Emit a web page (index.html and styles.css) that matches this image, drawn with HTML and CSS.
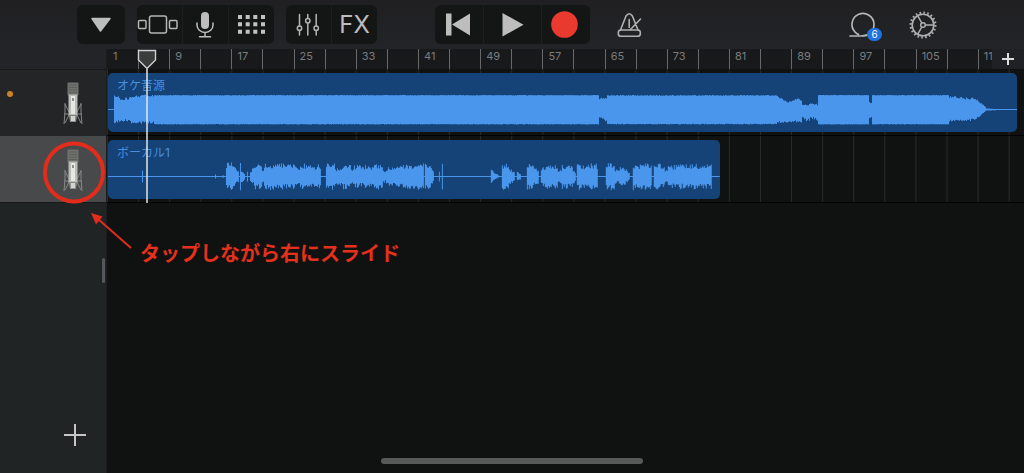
FILE: index.html
```html
<!DOCTYPE html>
<html lang="ja">
<head>
<meta charset="utf-8">
<meta name="viewport" content="width=device-width, initial-scale=1">
<title>トラック</title>
<link rel="stylesheet" href="styles.css">
</head>
<body>
<div class="app">
  <header class="toolbar">
    <div class="tools">
      <div class="group">
        <button class="tool wide" aria-label="メニュー"><svg width="48" height="39" viewBox="0 0 48 39"><path d="M15 13.500h18L23.500 26z" fill="#bdbdbd" stroke="#bdbdbd" stroke-width="1.500" stroke-linejoin="round"/></svg></button>
      </div>
      <div class="group">
        <button class="tool" aria-label="ブラウザ"><svg width="45" height="39" viewBox="0 0 45 39" fill="none" stroke="#b5b5b5" stroke-width="1.500"><rect x="12.500" y="11" width="17" height="17" rx="2"/><rect x="1.500" y="15.500" width="7.500" height="8" rx="1"/><rect x="32.500" y="15.500" width="7.500" height="8" rx="1"/></svg></button>
        <button class="tool" aria-label="マイク"><svg width="45" height="39" viewBox="0 0 45 39" fill="none" stroke="#bdbdbd" stroke-width="1.500" stroke-linecap="round"><rect x="18" y="7" width="8" height="17" rx="4" fill="#bdbdbd" stroke="none"/><path d="M14 18v2a8 7.500 0 0 0 16 0v-2M22 27.500v4M16.500 31.700h11"/></svg></button>
        <button class="tool" aria-label="トラック表示"><svg width="45" height="39" viewBox="0 0 45 39" fill="#c2c2c2"><path d="M9 10h4v4h-4zm7.700 0h4v4h-4zm7.600 0h4v4h-4zm7.700 0h4v4h-4zM9 17.300h4v4h-4zm7.700 0h4v4h-4zm7.600 0h4v4h-4zm7.700 0h4v4h-4zM9 24.700h4v4h-4zm7.700 0h4v4h-4zm7.600 0h4v4h-4zm7.700 0h4v4h-4z"/></svg></button>
      </div>
      <div class="group">
        <button class="tool" aria-label="ミキサー"><svg width="45" height="39" viewBox="0 0 45 39" fill="none" stroke="#b5b5b5" stroke-width="1.500" stroke-linecap="round"><path d="M13.500 9.500v11.500M13.500 25.500v4.500M21.800 9.500v4M21.800 18v12M30.200 9.500v11.500M30.200 25.500v4.500"/><circle cx="13.500" cy="23.300" r="2.200"/><circle cx="21.800" cy="15.700" r="2.200"/><circle cx="30.200" cy="23.300" r="2.200"/></svg></button>
        <button class="tool fx">FX</button>
      </div>
    </div>
    <div class="group transport">
      <button class="tool wide" aria-label="先頭に戻る"><svg width="48" height="39" viewBox="0 0 48 39" fill="#bdbdbd"><path d="M11 8.500h5.500v22H11zM35 8.500v22L17 19.500z"/></svg></button>
      <button class="tool wider" aria-label="再生"><svg width="56" height="39" viewBox="0 0 56 39"><path d="M18.500 8l21 11.700-21 11.800z" fill="#bdbdbd"/></svg></button>
      <button class="tool wide" aria-label="録音"><svg width="48" height="39" viewBox="0 0 48 39"><circle cx="22.500" cy="19.500" r="13.300" fill="#ea3a30"/></svg></button>
    </div>
    <div class="extras">
      <button class="plain" aria-label="メトロノーム"><svg width="32" height="32" viewBox="0 0 32 32" fill="none" stroke="#b0b0b0" stroke-width="1.600" stroke-linejoin="round" stroke-linecap="round"><path d="M6.500 21L12 7q3.200-4.500 6.400 0l5.600 14M15.200 10.500v8M16.500 20.500L26.500 10"/><rect x="4.300" y="21" width="22" height="6.300" rx="2.600"/></svg></button>
      <div class="right">
        <button class="plain loop" aria-label="ループブラウザ 6"><svg width="32" height="32" viewBox="0 0 32 32" fill="none" stroke="#b5b5b5" stroke-width="1.700" stroke-linecap="round"><path d="M3 27h11c8 0 13-4 13-12a11 11 0 1 0-19 8q1.500 2 3.500 2.300"/></svg><span class="badge">6</span></button>
        <button class="plain" aria-label="設定"><svg width="32" height="32" viewBox="0 0 32 32" fill="none" stroke="#b0b0b0"><circle cx="16" cy="16" r="10.800" stroke-width="1.600"/><circle cx="16" cy="16" r="12.400" stroke-width="2.200" stroke-dasharray="1.600 2.295"/><circle cx="16" cy="16" r="2.300" stroke-width="1.500"/><path d="M18.500 16H26.500M14.800 14L10.800 6.800M14.800 18l-4 7.200" stroke-width="1.500"/></svg></button>
      </div>
    </div>
  </header>

  <main class="workspace">
    <aside class="sidebar">
      <div class="corner"></div>
      <div class="track-head">
        <span class="dot"></span>
        <svg class="mic" width="22" height="44" viewBox="0 0 22 44"><use href="#mic"/></svg>
      </div>
      <div class="track-head selected">
        <svg class="mic" width="22" height="44" viewBox="0 0 22 44"><use href="#mic"/></svg>
      </div>
      <span class="handle"></span>
      <button class="plain add-track" aria-label="トラックを追加"><svg width="24" height="24" viewBox="0 0 24 24" stroke="#c6c6c6" stroke-width="2"><path d="M1 12h22M12 1v22"/></svg></button>
    </aside>

    <section class="timeline">
      <div class="ruler">
        <div class="bars">
          <span>1</span><span>9</span><span>17</span><span>25</span><span>33</span><span>41</span><span>49</span><span>57</span><span>65</span><span>73</span><span>81</span><span>89</span><span>97</span><span>105</span><span>113</span>
        </div>
        <button class="add-section" aria-label="セクションを追加"><svg width="12" height="12" viewBox="0 0 12 12" stroke="#dedede" stroke-width="2"><path d="M0 6h12M6 0v12"/></svg></button>
      </div>
      <div class="lane">
        <div class="clip full"><span>オケ音源</span><svg id="wave-backing" viewBox="0 0 909 59" preserveAspectRatio="none"></svg></div>
      </div>
      <div class="lane">
        <div class="clip part"><span>ボーカル1</span><svg id="wave-vocal" viewBox="0 0 612 59" preserveAspectRatio="none"></svg></div>
      </div>
      <svg class="playhead" width="20" height="154" viewBox="0 0 20 154"><path d="M10 20V154" stroke="#e4e4e4" stroke-width="1.500"/><path d="M1.500 1.500h17v9.500L10 19.500 1.500 11z" fill="#3b3c3c" stroke="#cfcfcf" stroke-width="1.400"/></svg>
    </section>
  </main>

  <svg class="callout" width="140" height="254" viewBox="0 0 140 254"><circle cx="74" cy="172.500" r="29" fill="none" stroke="#e22c1c" stroke-width="4"/><path d="M131 248L98 219" stroke="#e22c1c" stroke-width="2"/><path d="M91 213l11.500 3.500-6.500 8z" fill="#e22c1c"/></svg>
  <p class="note">タップしながら右にスライド</p>
  <span class="home-bar"></span>
</div>

<svg class="defs" width="0" height="0" aria-hidden="true">
  <symbol id="mic" viewBox="0 0 22 44">
    <path d="M3 21v9L2 42M19 21v9L20 42M2 32h18M3 41l4-8M19 41l-4-8M3 22l4 8M19 22l-4 8" fill="none" stroke="#858b88" stroke-width="1"/>
    <rect x="5.500" y="0.500" width="11" height="13" rx="1" fill="#6f716d"/>
    <path d="M7 3h8M7 5.500h8M7 8h8M7 10.500h8" stroke="#5d605c" stroke-width="1"/>
    <rect x="6.500" y="12.500" width="9" height="21" fill="#b7bdb8"/>
    <rect x="9" y="14" width="4" height="18" fill="#e6e8e3"/>
    <rect x="10" y="16" width="2" height="3" fill="#8b918c"/>
    <path d="M7 33.500h8l-1 6.500H8z" fill="#8c928e"/>
    <rect x="9" y="34" width="4" height="5" fill="#d2d5cf"/>
  </symbol>
</svg>
<script src="waves.js"></script>
</body>
</html>
```

FILE: styles.css
```css
* { box-sizing: border-box; }
body {
  margin: 0;
  background: #101211;
  font-family: Inter, "Noto Sans CJK JP", sans-serif;
}
button {
  border: 0;
  padding: 0;
  background: none;
  color: #bdbdbd;
  font-family: inherit;
}
svg { display: block; }
.defs { position: absolute; }
.app {
  position: relative;
  min-height: 100vh;
  display: flex;
  flex-direction: column;
  overflow: hidden;
}

.toolbar {
  display: grid;
  grid-template-columns: 1fr auto 1fr;
  align-items: center;
  height: 49px;
  background: linear-gradient(#202022, #222427);
}
.tools {
  display: flex;
  gap: 12px;
  padding-left: 77px;
}
.group {
  display: flex;
  gap: 1px;
  border-radius: 6px;
  overflow: hidden;
  background: #1d1f20;
}
.tool {
  width: 45px;
  height: 39px;
  background: #141616;
}
.tool.wide { width: 48px; }
.tool.wider { width: 57px; }
.tool.fx {
  font-family: Inter, sans-serif;
  font-size: 24px;
  font-weight: 400;
}
.extras {
  display: flex;
  justify-content: space-between;
  padding: 0 85px 0 24px;
}
.right {
  display: flex;
  gap: 28px;
}
.plain { position: relative; }
.badge {
  position: absolute;
  right: -3px;
  bottom: 0;
  width: 15px;
  height: 13px;
  border-radius: 7px;
  background: #2272dd;
  color: #f2f6fc;
  font-size: 10px;
  line-height: 13px;
}

.workspace {
  flex: 1;
  display: grid;
  grid-template-columns: 107px 1fr;
}
.sidebar {
  display: flex;
  flex-direction: column;
  background: #212425;
  border-right: 1px solid #1a1c1d;
}
.corner {
  height: 20px;
  background: #222427;
}
.track-head {
  display: flex;
  align-items: center;
  height: 67px;
  padding: 2px 22px 0 7px;
  border-top: 1px solid #17191a;
  background: #242527;
}
.track-head.selected {
  background: #48494b;
  border-color: #48494b;
  border-bottom: 1px solid #17191a;
}
.mic { margin-left: auto; }
.dot {
  width: 6px;
  height: 6px;
  border-radius: 50%;
  background: #cb8329;
  margin-bottom: 20px;
}
.handle {
  align-self: flex-end;
  width: 3px;
  height: 25px;
  margin: 55px 1px 0;
  border-radius: 2px;
  background: #55575a;
}
.add-track {
  align-self: flex-end;
  margin: auto 19px 26px;
}

.timeline { position: relative; }
.ruler {
  position: relative;
  height: 20px;
  overflow: hidden;
  background: #18191b;
}
.bars {
  display: flex;
  width: calc(100% + 16px);
}
.bars span {
  flex: 1 1 0;
  height: 20px;
  padding-left: 5px;
  border-left: 1px solid #67686a;
  background: linear-gradient(#67686a, #67686a) 30px 0 / 1px 100% no-repeat;
  color: #7b7c7e;
  font-size: 11px;
  line-height: 15px;
}
.bars span:first-child { border-color: transparent; }
.add-section {
  position: absolute;
  right: 0;
  top: 0;
  display: grid;
  place-items: center;
  width: 32px;
  height: 20px;
  background: #202124;
}
.lane {
  height: 67px;
  padding: 4px 7px 4px 1px;
  border-bottom: 1px solid #000;
  background: linear-gradient(90deg, #292b2b 1px, transparent 1px) 0 0 / calc((100% + 16px) / 30) 100%;
}
.clip {
  position: relative;
  height: 59px;
  border-radius: 5px;
  overflow: hidden;
  background: #154277;
}
.clip.part { width: 67.3%; }
.clip span {
  position: absolute;
  left: 9px;
  top: 4px;
  color: #498fdf;
  font-size: 12px;
  line-height: 18px;
}
.clip svg {
  width: 100%;
  height: 100%;
}
.playhead {
  position: absolute;
  left: 30px;
  top: 0;
}

.callout {
  position: absolute;
  left: 0;
  top: 0;
}
.note {
  position: absolute;
  left: 140px;
  top: 238px;
  margin: 0;
  color: #e5301c;
  font-family: "Noto Sans CJK JP", sans-serif;
  font-size: 20px;
  font-weight: 700;
  line-height: 30px;
}
.home-bar {
  position: absolute;
  left: 50%;
  bottom: 9px;
  width: 262px;
  height: 6px;
  margin-left: -131px;
  border-radius: 3px;
  background: #575858;
}
```

FILE: waves.js
```js
const NS = "http://www.w3.org/2000/svg";

// Repeatable noise, so that a clip always draws the same wave.
function noise(seed) {
  let s = seed;
  return () => (s = (s * 16807) % 2147483647) / 2147483647;
}

// Each segment: [start, end, top start, top end, bottom start, bottom end, roughness]
function draw(id, width, mid, segments, seed, step) {
  const svg = document.getElementById(id);
  const rnd = noise(seed);
  let d = `M0 ${mid - 0.5}H${width}V${mid + 0.5}H0z`;
  for (const [x0, x1, t0, t1, b0, b1, rough] of segments) {
    for (let x = x0; x < x1; x += step) {
      const k = (x - x0) / (x1 - x0);
      const w = Math.min(step, x1 - x);
      const top = (t0 + (t1 - t0) * k) * (1 - rough * rnd());
      const bottom = (b0 + (b1 - b0) * k) * (1 - rough * rnd());
      d += `M${x} ${mid - top}h${w}V${mid + bottom}h${-w}z`;
    }
  }
  const path = document.createElementNS(NS, "path");
  path.setAttribute("d", d);
  path.setAttribute("fill", "#4996ec");
  svg.appendChild(path);
}

draw("wave-backing", 909, 36.5, [
  [6, 12, 14, 13, 14, 12, 0.15], [12, 23, 12, 13, 12, 13, 0.25],
  [23, 46, 14.5, 15, 14.5, 15, 0.22], [46, 491, 14.5, 14.5, 15, 15, 0.03],
  [491, 499, 12, 13, 8, 13, 0.15], [499, 669, 14.5, 14.5, 15, 15, 0.05],
  [669, 679, 14, 8, 14, 13, 0.2], [679, 690, 8, 11.5, 13, 13, 0.16],
  [690, 694, 11, 9, 13, 13, 0.1], [694, 710, 6.5, 6.5, 12, 12, 0.4],
  [710, 761, 14.5, 14.5, 15, 15, 0.02], [761, 764, 8, 8, 9, 9, 0.2],
  [764, 841, 14.5, 14.5, 15, 15, 0.03], [841, 856, 14, 12.5, 12, 12, 0.16],
  [856, 868, 12.5, 12, 12, 11, 0.2], [868, 878, 11, 2, 10, 1, 0.18],
  [878, 882, 1, 1, 1, 1, 0], [882, 888, 1, 0.5, 1, 1, 0.4]
], 31, 1);

// Phrases of the vocal: [start, end, height at start, height at end]
const phrases = [
  [34, 35, 6, 8], [107, 108, 2, 2], [114, 116, 1, 1],
  [118, 127, 14, 14], [127, 131, 10, 5], [132, 133, 14, 13], [133, 137, 7, 3], [139, 140, 5, 5],
  [142, 146, 6, 10], [146, 154, 14, 13], [154, 156, 6, 5], [156, 175, 14, 14],
  [175, 190, 13, 12], [190, 192, 7, 6], [192, 204, 14, 11], [204, 213, 10, 13],
  [218, 227, 14, 13], [227, 235, 8, 11], [235, 243, 13, 12], [243, 245, 7, 5],
  [245, 254, 12, 11], [254, 261, 11, 12], [261, 266, 12, 8], [266, 275, 14, 13],
  [275, 278, 7, 6], [278, 293, 9, 11], [293, 316, 12, 14], [317, 323, 13, 13], [323, 326, 9, 4],
  [331, 332, 5, 5], [334, 335, 13, 13],
  [383, 386, 8, 5], [386, 391, 4, 1], [394, 401, 14, 12], [401, 407, 8, 6], [409, 413, 6, 3],
  [419, 426, 14, 13], [426, 431, 9, 8], [433, 440, 9, 13], [440, 450, 14, 12], [450, 454, 8, 8],
  [454, 465, 13, 12], [465, 468, 8, 5], [469, 474, 14, 13], [474, 480, 12, 12], [480, 490, 14, 13],
  [498, 507, 14, 14], [507, 512, 8, 7], [512, 516, 12, 10], [516, 522, 10, 4],
  [525, 532, 14, 12], [532, 544, 13, 14], [546, 557, 14, 12], [557, 560, 7, 8],
  [560, 574, 11, 13], [574, 583, 12, 13], [583, 599, 13, 12], [599, 604, 12, 14]
];
const vocal = phrases.map(([a, b, h0, h1]) => [a, b, h0, h1, h0, h1, b - a > 2 ? 0.42 : 0.05]);
draw("wave-vocal", 612, 36.5, vocal, 47, 1);
```
